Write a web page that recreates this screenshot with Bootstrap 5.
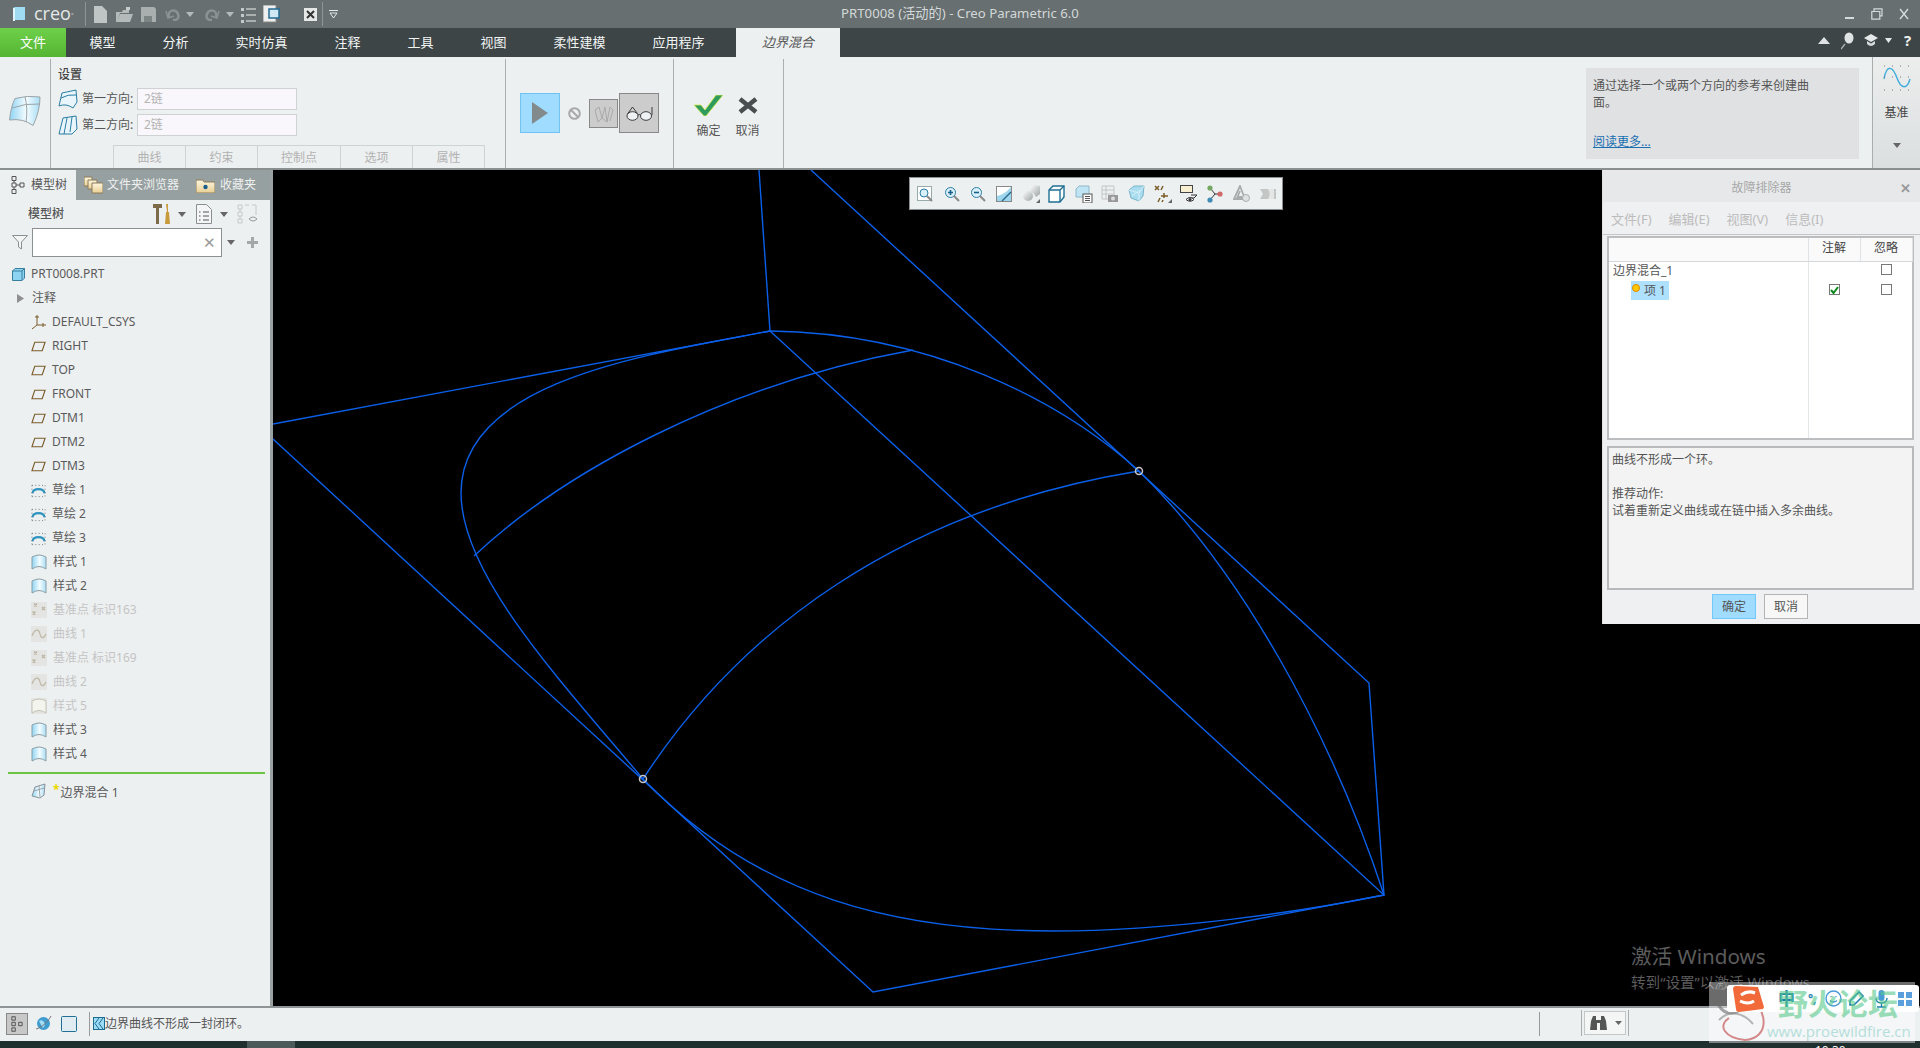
<!DOCTYPE html>
<html lang="zh">
<head>
<meta charset="UTF-8">
<title>PRT0008 (活动的) - Creo Parametric 6.0</title>
<link href="https://cdn.jsdelivr.net/npm/bootstrap@5.3.0/dist/css/bootstrap.min.css" rel="stylesheet">
<style>
html, body { height: 1048px; }
body { width: 1920px; background: #000; font-family: "Noto Sans", "Noto Sans CJK SC", sans-serif; font-size: 12px; color: #555; overflow: hidden; position: relative; }
.defs-holder { width: 0; height: 0; flex: none; }
svg { display: block; flex: none; }
.ml-2px { margin-left: 2px; } .ml-5px { margin-left: 5px; } .ml-6px { margin-left: 6px; } .ml-7px { margin-left: 7px; }
.ml-8px { margin-left: 8px; } .ml-9px { margin-left: 9px; } .ml-10px { margin-left: 10px; } .ml-12px { margin-left: 12px; } .ml-13px { margin-left: 13px; }
.mr-7px { margin-right: 7px; } .mr-10px { margin-right: 10px; } .mr-11px { margin-right: 11px; } .mr-12px { margin-right: 12px; }

.title-bar { height: 28px; flex: none; background: #676f70; position: relative; padding-left: 13px; }
.creo-word { font-family: "Open Sans", sans-serif; font-size: 18px; color: #e4e8e8; width: 60px; padding-left: 9px; line-height: 1; margin-top: -3px; }
.creo-word sup { font-size: 6px; }
.q-sep { width: 1px; height: 24px; background: #8d9595; margin-right: 2px; flex: none; }
.q-sep-end { margin: 0 6px 0 5px; }
.q-slot { width: 24px; display: flex; justify-content: center; }
.q-caret { width: 12px; display: flex; justify-content: center; }
.q-gap { width: 20px; }
.app-title { position: absolute; left: 0; right: 0; top: 3px; text-align: center; font-size: 13.2px; line-height: 20px; color: #d3d8d8; }
.win-btns { position: absolute; right: 11px; top: 8px; gap: 16px; }

.ribbon-tabs { height: 29px; flex: none; background: #3d4547; position: relative; flex-wrap: nowrap; }
.rtab { font-size: 13px; line-height: 29px; color: #f2f4f4; padding: 0 23.5px; }
.rtab-file { width: 66px; padding: 0; text-align: center; background: linear-gradient(#6ed04a, #55b532); color: #fff; }
.rtab-active { width: 104px; margin-left: 8px; padding: 0; text-align: center; background: #edf0f1; color: #555; font-style: italic; }
.help-icons { position: absolute; right: 7px; top: 4px; height: 17px; }
.help-mark { color: #eef0f0; font-size: 15px; font-weight: 700; line-height: 1; width: 9px; }

.ribbon { height: 113px; flex: none; background: #edf0f1; border-bottom: 2px solid #8a8f90; position: relative; }
.rb-group { height: 109px; margin-top: 2px; border-right: 1px solid #aab0b1; flex: none; }
.rb-first { width: 51px; padding: 37px 0 0 9px; }
.rb-settings { width: 455px; padding-left: 7px; position: relative; }
.rb-heading { font-size: 12px; line-height: 16px; margin-top: 8px; margin-bottom: 3px; color: #444; font-weight: 500; }
.dir-row { height: 26px; gap: 4px; }
.dir-label { width: 51px; white-space: nowrap; color: #555; font-size: 12px; }
.dir-input { width: 160px; height: 22px; border: 1px solid #cfd2d3; background: #f9f7fb; color: #b4b4b4; padding-left: 6px; line-height: 20px; }
.rb-tabs { position: absolute; left: 62px; bottom: 0; height: 23px; }
.rb-tab { border: 1px solid #d0d3d4; border-bottom: 0; margin-right: -1px; height: 23px; line-height: 23px; text-align: center; color: #b2b2b2; width: 73px; }
.rb-tab-wide { width: 84px; }
.rb-run { width: 168px; padding: 34px 0 0 14px; }
.play-box { width: 40px; height: 40px; background: #a0dcff; border: 1px solid #70c4f4; }
.no-sign { width: 29px; margin-top: 14px; }
.geo-box { width: 29px; height: 29px; background: #cccccc; border: 1px solid #888; margin-top: 6px; }
.glass-box { width: 40px; height: 40px; background: #cccccc; border: 1px solid #888; margin-left: 1px; }
.rb-ok { width: 110px; padding: 36px 0 0 15px; }
.ok-btn { width: 39px; }
.ok-icon { height: 21px; }
.ok-label { margin-top: 7px; line-height: 16px; color: #555; }
.help-box { position: absolute; left: 1586px; top: 11px; width: 273px; height: 91px; background: #e0e1e3; padding: 9px 7px; line-height: 17px; color: #555; }
.help-box p { margin: 0 0 22px; width: 225px; }
.help-box a { color: #1a6fb0; }
.datum-col { position: absolute; left: 1872px; top: 0; width: 48px; height: 111px; background: linear-gradient(#eceeee, #dcdfdf); border-left: 1px solid #a8adad; padding-top: 8px; color: #444; }
.datum-col span { margin-top: 14px; line-height: 16px; }
.datum-caret { margin-top: 22px; }

.work-area { height: 836px; flex: none; }
.left-pane { width: 273px; flex: none; background: #edf0f1; border-right: 3px solid #9aa1a2; }
.pane-tabs { height: 30px; background: #97a0a1; color: #eef0f0; font-size: 12px; }
.pane-tab { height: 30px; gap: 6px; }
.pane-tab-on { width: 76px; background: #edf0f1; color: #555; padding-left: 11px; }
.pane-tab-2 { padding-left: 8px; width: 112px; gap: 4px; }
.pane-tab-3 { padding-left: 8px; gap: 5px; }
.tree-tools { height: 28px; padding-left: 28px; }
.tree-title { width: 125px; font-weight: 500; color: #555; font-size: 12px; }
.filter-row { height: 31px; margin-top: -1px; padding-left: 12px; }
.filter-input { width: 190px; height: 29px; margin-left: 4px; background: #fff; border: 1px solid #8b9091; padding-right: 5px; color: #999; font-size: 15px; }
.tree-list { margin: 4px 0 0; padding: 0; list-style: none; }
.tree-row { height: 24px; gap: 6px; padding-left: 31px; color: #5a5a5a; font-size: 12px; white-space: nowrap; }
.tree-root { padding-left: 12px; }
.tree-note { padding-left: 17px; gap: 8px; }
.tree-off { color: #c4c4c4; }
.tree-rule { height: 2px; width: 257px; margin: 6px 0 5px 8px; background: #6cc644; }
.new-star { color: #e8d800; font-size: 12px; vertical-align: 3px; font-weight: 700; margin-right: 1px; }

.canvas-pane { flex-grow: 1; background: #000; position: relative; }
.curve-view { position: absolute; left: 0; top: 0; }
.view-bar { position: absolute; left: 636px; top: 7px; width: 374px; height: 33px; background: #edf0f1; border: 1px solid #8a9091; padding-left: 2px; }
.view-slot { width: 26.4px; display: flex; justify-content: center; flex: none; }
.activate-note { position: absolute; left: 1358px; top: 776px; color: #5c5c5c; line-height: 1; white-space: nowrap; }
.activate-note b { display: block; font-weight: 400; font-size: 20.6px; margin-bottom: 8px; }
.activate-note span { font-size: 14.6px; }

.fix-dialog { position: absolute; left: 1329px; top: 0; width: 318px; height: 454px; background: #eff0f2; border-left: 1px solid #dfe1e2; }
.fix-head { height: 32px; background: #e6e8ea; color: #a8a8a8; text-align: center; line-height: 32px; padding-top: 2px; position: relative; }
.fix-close { position: absolute; right: 9px; top: 2px; font-weight: 700; font-size: 13px; color: #999; }
.fix-menu { height: 33px; padding: 3px 0 0 8px; gap: 17px; color: #bcbcbc; font-size: 13px; border-bottom: 1px solid #c4c6c7; }
.fix-tree { margin: 1px 0 0 4px; width: 307px; height: 204px; border: 2px solid #bcbdbe; background: #fff; }
.fix-table { width: 303px; height: 200px; table-layout: fixed; border-collapse: collapse; }
.col-name { width: 199px; } .col-flag { width: 52px; }
.fix-table th { height: 23px; background: #fafafa; font-weight: 400; text-align: center; border-right: 1px solid #dfe3e6; border-bottom: 1px solid #d5d8da; color: #444; padding: 0 0 2px; }
.fix-table td { height: 20px; padding: 0 0 0 4px; white-space: nowrap; color: #555; }
.fix-table td:first-child { border-right: 1px solid #e3e7ea; }
.fix-table td.cell-mid { padding: 0; }
.fix-table .filler td { height: auto; }
.fix-box { width: 11px; height: 11px; border: 1px solid #777; background: #fff; margin: 0 auto; display: flex; align-items: center; justify-content: center; }
.fix-box-up { margin-top: -3px; }
.item-pick { display: inline-flex; align-items: center; margin: -2px 0 0 18px; height: 19px; width: 38px; background: #aee0ff; gap: 4px; padding-left: 1px; vertical-align: middle; }
.item-dot { margin-top: -5px; }
.fix-msg { margin: 6px 0 0 4px; width: 307px; height: 144px; background: #f3f3f3; border: 2px solid #b8b9ba; padding: 3px 3px; line-height: 17px; color: #555; }
.fix-msg p { margin: 0; }
.fix-btns { margin-top: 4px; padding-left: 109px; gap: 8px; }
.fix-btn { width: 44px; height: 25px; line-height: 23px; text-align: center; border: 1px solid #b4b4b4; background: #f7f7f7; color: #555; }
.fix-btn-on { background: #a0dcff; border-color: #70c8ff; }

.status-bar { height: 35px; flex: none; background: #edf0f1; border-top: 2px solid #8f9596; padding: 0 0 2px 6px; position: relative; color: #555; }
.stat-on { width: 22px; height: 22px; background: #c8c8c8; border: 1px solid #888; }
.stat-sep { width: 1px; height: 24px; background: #999; margin: 0 3px 0 12px; }
.stat-sep-far { position: absolute; left: 1539px; top: 4px; margin: 0; }
.find-box { position: absolute; left: 1581px; top: 2px; height: 26px; border-left: 1px solid #a8adad; border-right: 1px solid #a8adad; padding: 1px 2px; }
.find-inner { width: 42px; height: 24px; border: 1px solid #c4c7c8; background: #f4f5f5; }
.task-bar { height: 8px; flex: none; background: #20302f; position: relative; overflow: hidden; color: #fff; }
.task-on { position: absolute; left: 247px; top: 0; width: 48px; height: 8px; background: #4c5a5a; }
.task-clock { position: absolute; left: 1815px; top: 3px; line-height: 14px; font-size: 12px; }

.site-mark { position: absolute; left: 1709px; top: 982px; width: 206px; height: 61px; background: rgba(255,255,255,.42); }
.ime-bar { position: absolute; left: 18px; top: 3px; width: 192px; height: 27px; border-radius: 3px; background: #fff; padding-left: 51px; color: #1f7fae; font-size: 17px; font-weight: 700; }
.ime-punct { font-size: 12px; }
.ime-s { position: absolute; left: 24px; top: 3px; }
.site-name { position: absolute; left: 69px; top: 2px; font-size: 30px; line-height: 40px; color: #58c98c; opacity: .6; white-space: nowrap; font-weight: 700; }
.site-url { position: absolute; left: 58px; top: 37px; font-family: "Open Sans", sans-serif; font-size: 15px; line-height: 24px; color: #b4dedb; white-space: nowrap; }
.site-logo { position: absolute; left: 0; top: 0; }
</style>
</head>
<body class="d-flex flex-column">

<svg class="defs-holder" width="0" height="0">
  <defs>
    <linearGradient id="gradBlue" x1="0" y1="0" x2="1" y2="0"><stop offset="0" stop-color="#8fd4f4"/><stop offset=".55" stop-color="#f4fcff"/><stop offset="1" stop-color="#a8def6"/></linearGradient>
    <linearGradient id="gradGrey" x1="0" y1="0" x2="1" y2="1"><stop offset="0" stop-color="#fff"/><stop offset="1" stop-color="#9ba1a2"/></linearGradient>
    <linearGradient id="gradFolder" x1="0" y1="0" x2="0" y2="1"><stop offset="0" stop-color="#fdf6df"/><stop offset="1" stop-color="#e9cf94"/></linearGradient>
    <symbol id="icoPlane" viewBox="0 0 16 16"><path d="M4 3.5h11l-3 9H1z" fill="none" stroke="#7a5c2a" stroke-width="1.2"/></symbol>
    <symbol id="icoSketch" viewBox="0 0 16 16"><path d="M1.5 11C2.500 5 13.500 5 14.500 11" fill="none" stroke="#2f93c0" stroke-width="2.200"/><path d="M1 2.500h14M1 14.500h14M1 2.500v12M15 2.500v12" fill="none" stroke="#666" stroke-width=".9" stroke-dasharray="1 2.600"/></symbol>
    <symbol id="icoStyle" viewBox="0 0 16 16"><path d="M1 3Q8 -1 15 3V15Q8 10 1 15z" fill="url(#gradBlue)" stroke="#8c9ea6"/></symbol>
    <symbol id="icoStyleOff" viewBox="0 0 16 16"><rect width="16" height="16" fill="#e4e4e2"/><path d="M1 3Q8 -1 15 3V15Q8 10 1 15z" fill="#f4f4ee" stroke="#c2c2b4"/></symbol>
    <symbol id="icoPoint" viewBox="0 0 16 16"><rect width="16" height="16" fill="#e4e4e2"/><path d="M3 1.500l3 3m0-3l-3 3M11 5l3 3m0-3l-3 3M1.500 9.500l3 3m0-3l-3 3" stroke="#bdb7a6" stroke-width="1.600" fill="none"/></symbol>
    <symbol id="icoCurve" viewBox="0 0 16 16"><rect width="16" height="16" fill="#e4e4e2"/><path d="M1 10C4 2 8 3 9 8s4 5 6 0" fill="none" stroke="#bdb7a6" stroke-width="1.200"/></symbol>
    <symbol id="icoBlend" viewBox="0 0 16 16"><path d="M1 13L4 4 14 1 13 12 9 15z" fill="url(#gradBlue)" stroke="#8a9298"/><path d="M3 8l10-3M8 3l1 11" stroke="#8a9298" fill="none" stroke-width=".8"/></symbol>
    <symbol id="icoCaret" viewBox="0 0 8 5"><path d="M0 0h8L4 5z" fill="#666"/></symbol>
    <symbol id="icoCaretLight" viewBox="0 0 8 5"><path d="M0 0h8L4 5z" fill="#b4baba"/></symbol>
    <symbol id="icoCorner" viewBox="0 0 4 4"><path d="M4 0v4H0z" fill="#666"/></symbol>
  </defs>
</svg>

<!-- title bar -->
<div class="title-bar d-flex align-items-center">
  <svg width="12" height="14" viewBox="0 0 12 14"><path d="M2 0h10v13H0V1z" fill="#9fdcf2"/><path d="M0 1h2v13H0z" fill="#dff4fb"/></svg>
  <div class="creo-word">creo<sup>°</sup></div>
  <div class="q-sep"></div>
  <div class="q-slot"><svg width="13" height="17" viewBox="0 0 13 17"><path d="M0 0h8l5 5v12H0z" fill="#bfc5c5"/></svg></div>
  <div class="q-slot"><svg width="17" height="15" viewBox="0 0 17 15"><path d="M0 5h6l1-2h6v3H4L1 15H0zM4 7h13l-3 8H1z" fill="#b4baba"/><path d="M10 0h4v3h-4z" fill="#c6cbcb"/></svg></div>
  <div class="q-slot"><svg width="15" height="15" viewBox="0 0 15 15"><path d="M0 0h13l2 2v13H0z" fill="#a9afaf"/><path d="M3 9h8v6H3z" fill="#7c8484"/></svg></div>
  <div class="q-slot"><svg width="15" height="13" viewBox="0 0 15 13" fill="none" stroke="#8a9292" stroke-width="2.500"><path d="M4 9C2 2 11 0 13 6s-3 6-5 6"/><path d="M1 3l2 7 6-2" stroke-width="1.500"/></svg></div>
  <div class="q-caret"><svg width="8" height="5"><use href="#icoCaretLight"/></svg></div>
  <div class="q-slot ms-1"><svg width="15" height="13" viewBox="0 0 15 13" fill="none" stroke="#8a9292" stroke-width="2.500"><path d="M11 9C13 2 4 0 2 6s3 6 5 6"/><path d="M14 3l-2 7-6-2" stroke-width="1.500"/></svg></div>
  <div class="q-caret"><svg width="8" height="5"><use href="#icoCaretLight"/></svg></div>
  <div class="q-slot"><svg width="15" height="17" viewBox="0 0 15 17"><path d="M0 2h3v3H0zM0 8h3v3H0zM0 14h3v3H0z" fill="#c4c9c9"/><path d="M5 3h10M5 9h10M5 15h10" stroke="#aab0b0" stroke-width="2"/></svg></div>
  <div class="q-slot"><svg width="18" height="18" viewBox="0 0 18 18"><rect x="0" y="0" width="13" height="17" fill="#eef0f0" stroke="#888"/><rect x="6" y="4" width="10" height="9" fill="#cfe8f4" stroke="#246a92" stroke-width="1.500"/></svg></div>
  <div class="q-gap"></div>
  <svg width="13" height="13" viewBox="0 0 13 13"><rect width="13" height="13" fill="#e6e8e8"/><path d="M3 3l7 7m0-7l-7 7" stroke="#333" stroke-width="2"/></svg>
  <div class="q-sep q-sep-end"></div>
  <svg width="9" height="8" viewBox="0 0 9 8"><path d="M0 .5h9M1 3l3.500 5L8 3z" fill="none" stroke="#e4e8e8"/></svg>
  <div class="app-title">PRT0008 (活动的) - Creo Parametric 6.0</div>
  <div class="win-btns d-flex align-items-center">
    <svg width="10" height="12" viewBox="0 0 10 12"><path d="M0 9h9v2H0z" fill="#d5dada"/></svg>
    <svg width="12" height="12" viewBox="0 0 12 12" fill="none" stroke="#d5dada" stroke-width="1.200"><path d="M3 3V.8h8v7H9"/><path d="M.8 3.500h8v7.700h-8z"/></svg>
    <svg width="10" height="12" viewBox="0 0 10 12"><path d="M1 1l8 10m0-10L1 11" stroke="#d5dada" stroke-width="1.400"/></svg>
  </div>
</div>

<!-- ribbon tabs -->
<div class="nav ribbon-tabs">
  <span class="rtab rtab-file">文件</span>
  <span class="rtab">模型</span>
  <span class="rtab">分析</span>
  <span class="rtab">实时仿真</span>
  <span class="rtab">注释</span>
  <span class="rtab">工具</span>
  <span class="rtab">视图</span>
  <span class="rtab">柔性建模</span>
  <span class="rtab">应用程序</span>
  <span class="rtab rtab-active">边界混合</span>
  <div class="help-icons d-flex align-items-center">
    <svg class="mr-11px" width="12" height="7" viewBox="0 0 12 7"><path d="M0 7L6 0l6 7z" fill="#dfe3e3"/></svg>
    <svg class="mr-10px" width="13" height="18" viewBox="0 0 13 18"><ellipse cx="8" cy="6" rx="4.500" ry="5.500" fill="#dfe3e3"/><path d="M4 12L0 17" stroke="#aeb4b4" stroke-width="1.300"/></svg>
    <svg class="mr-7px" width="14" height="13" viewBox="0 0 14 13"><path d="M7 0l7 4-7 4-7-4z" fill="#e6e9e9"/><path d="M3 7v3q4 4 8 0V7L7 9.500z" fill="#d4d9d9"/></svg>
    <svg class="mr-12px" width="7" height="5"><path d="M0 0h7L3.500 5z" fill="#e6e9e9"/></svg>
    <span class="help-mark">?</span>
  </div>
</div>

<!-- ribbon -->
<div class="ribbon d-flex">
  <div class="rb-group rb-first">
    <svg width="32" height="30" viewBox="0 0 32 30"><path d="M.5 24Q2 10 6 2.500Q18 -1 31 1Q31 15 24 29.500Q14 22 .5 24z" fill="url(#gradBlue)" stroke="#9aa2a6"/><path d="M3 12Q16 7 31 8M16 1Q19 12 17 26" stroke="#9aa2a6" fill="none"/></svg>
  </div>
  <div class="rb-group rb-settings">
    <div class="rb-heading">设置</div>
    <div class="dir-row d-flex align-items-center">
      <svg width="20" height="20" viewBox="0 0 20 20"><path d="M1 17L4 4 18 1 19 13 15 19Q8 14 1 17z" fill="#e8f6fc" stroke="#2a7ca4"/><path d="M3 9Q10 5 18 6" stroke="#2a7ca4" fill="none"/></svg>
      <span class="dir-label">第一方向:</span>
      <div class="dir-input">2链</div>
    </div>
    <div class="dir-row d-flex align-items-center">
      <svg width="20" height="20" viewBox="0 0 20 20"><path d="M1 19L5 3 18 1 19 14 14 19z" fill="#e8f6fc" stroke="#2a7ca4"/><path d="M9 3L6 19M14 2l-2 15" stroke="#2a7ca4" fill="none"/></svg>
      <span class="dir-label">第二方向:</span>
      <div class="dir-input">2链</div>
    </div>
    <div class="rb-tabs d-flex">
      <div class="rb-tab">曲线</div>
      <div class="rb-tab">约束</div>
      <div class="rb-tab rb-tab-wide">控制点</div>
      <div class="rb-tab">选项</div>
      <div class="rb-tab">属性</div>
    </div>
  </div>
  <div class="rb-group rb-run d-flex align-items-start">
    <div class="play-box d-flex align-items-center justify-content-center">
      <svg width="16" height="22" viewBox="0 0 16 22"><path d="M0 0l16 11L0 22z" fill="#838a8c"/></svg>
    </div>
    <div class="no-sign d-flex justify-content-center">
      <svg width="13" height="13" viewBox="0 0 13 13" fill="none" stroke="#a8a8a8" stroke-width="2"><circle cx="6.500" cy="6.500" r="5.300"/><path d="M3 3l7 7"/></svg>
    </div>
    <div class="geo-box d-flex align-items-center justify-content-center">
      <svg width="20" height="18" viewBox="0 0 20 18" fill="none" stroke="#a9a9a9"><path d="M1 5l4-3 3 11-4 4zM8 13l3-11 2 15zM13 17l3-15 3 3-3 11"/></svg>
    </div>
    <div class="glass-box d-flex align-items-center justify-content-center">
      <svg width="27" height="15" viewBox="0 0 27 15" fill="none" stroke="#3c3c3c"><ellipse cx="6.500" cy="10" rx="5.500" ry="4.300" fill="#eef2f4"/><ellipse cx="20" cy="10" rx="5.500" ry="4.300" fill="#eef2f4"/><path d="M12 9q1.200-1 2.500 0M1.500 8l5-7 5 6.500M26 9V1"/></svg>
    </div>
  </div>
  <div class="rb-group rb-ok d-flex align-items-start">
    <div class="ok-btn d-flex flex-column align-items-center">
      <svg class="ok-icon" width="29" height="21" viewBox="0 0 29 21"><path d="M0 10h7l4 5L22 0h7L12 21h-2z" fill="#2f9b5c" stroke="#d7e84c" stroke-width=".8"/></svg>
      <span class="ok-label">确定</span>
    </div>
    <div class="ok-btn d-flex flex-column align-items-center">
      <svg class="ok-icon" width="20" height="21" viewBox="0 0 20 21"><path d="M2 4l16 13m0-13L2 17" stroke="#4a4e50" stroke-width="4.500"/></svg>
      <span class="ok-label">取消</span>
    </div>
  </div>
  <div class="help-box">
    <p>通过选择一个或两个方向的参考来创建曲面。</p>
    <a href="#">阅读更多...</a>
  </div>
  <div class="datum-col d-flex flex-column align-items-center">
    <svg width="28" height="26" viewBox="0 0 28 26"><path d="M1 14C4 -2 10 2 14 13s10 12 13 1" fill="none" stroke="#45aedc" stroke-width="1.500"/><path d="M1 1h26M1 12h26M1 25h26" stroke="#777" stroke-dasharray="1 7" fill="none"/></svg>
    <span>基准</span>
    <svg class="datum-caret" width="8" height="5"><use href="#icoCaret"/></svg>
  </div>
</div>

<!-- main area -->
<div class="work-area d-flex">
  <aside class="left-pane">
    <div class="pane-tabs d-flex">
      <div class="pane-tab pane-tab-on d-flex align-items-center">
        <svg width="14" height="18" viewBox="0 0 14 18" fill="none" stroke="#555"><path d="M1 .5h4v4H1zM1 7h4v4H1zM1 13.500h4v4H1zM9 7h4v4H9zM3 4.500V7M3 11v2.500M5 9h4"/></svg>
        <span>模型树</span>
      </div>
      <div class="pane-tab pane-tab-2 d-flex align-items-center">
        <svg width="19" height="18" viewBox="0 0 19 18" stroke="#8a7a58"><path d="M0 1h8v9H0z" fill="url(#gradFolder)"/><path d="M4 4h9v9H4z" fill="url(#gradFolder)"/><path d="M8 7h11v10H8z" fill="url(#gradFolder)"/></svg>
        <span>文件夹浏览器</span>
      </div>
      <div class="pane-tab pane-tab-3 d-flex align-items-center">
        <svg width="19" height="15" viewBox="0 0 19 15"><path d="M0 2h7l1 2h11v11H0z" fill="url(#gradFolder)" stroke="#8a7a58"/><circle cx="9.500" cy="9" r="2.200" fill="#1a5f8c"/></svg>
        <span>收藏夹</span>
      </div>
    </div>
    <div class="tree-tools d-flex align-items-center">
      <span class="tree-title">模型树</span>
      <svg width="17" height="20" viewBox="0 0 17 20"><path d="M0 0h9v4H6v16H3V4H0z" fill="#7c6a48"/><path d="M13 0h2v8h1l1 12h-5l1-12h1z" fill="#c99a3c"/></svg>
      <svg class="ml-8px" width="8" height="5"><use href="#icoCaret"/></svg>
      <svg class="ml-10px" width="16" height="20" viewBox="0 0 16 20"><path d="M.5.500h10l5 5v14H.5z" fill="#f4f5f6" stroke="#8a9092"/><path d="M3 8h1.500M3 12h1.500M3 16h1.500M7 8h6M7 12h6M7 16h6" stroke="#555"/></svg>
      <svg class="ml-8px" width="8" height="5"><use href="#icoCaret"/></svg>
      <svg class="ml-9px" width="21" height="20" viewBox="0 0 21 20" fill="none" stroke="#c6c8c8"><path d="M1 1h4v4H1zM1 8h4v4H1zM1 15h4v4H1zM8 1h4M15 1h4v10M3 5v3M3 12v3"/><path d="M12 15q4-4 8 0q-4 4-8 0z" stroke="#999"/></svg>
    </div>
    <div class="filter-row d-flex align-items-center">
      <svg width="16" height="15" viewBox="0 0 16 15"><path d="M.5.500h15L9.500 7v7l-3-2V7z" fill="#f3f4f4" stroke="#8a8f90"/></svg>
      <div class="filter-input d-flex align-items-center justify-content-end">&#10005;</div>
      <svg class="ml-5px" width="8" height="5"><use href="#icoCaret"/></svg>
      <svg class="ml-12px" width="11" height="11" viewBox="0 0 11 11"><path d="M4 0h3v4h4v3H7v4H4V7H0V4h4z" fill="#a4a8a8"/></svg>
    </div>
    <ul class="tree-list">
      <li class="tree-row tree-root d-flex align-items-center">
        <svg width="13" height="13" viewBox="0 0 13 13"><path d="M3 .5h9.500V10L10 12.500H.5V3z" fill="#8dd4f2" stroke="#3a7e9e"/><path d="M.5 3H10v9.500M10 3l2.500-2.500" fill="none" stroke="#3a7e9e"/></svg>
        <span>PRT0008.PRT</span>
      </li>
      <li class="tree-row tree-note d-flex align-items-center">
        <svg width="7" height="9" viewBox="0 0 7 9"><path d="M0 0l7 4.500L0 9z" fill="#8f8f8f"/></svg>
        <span>注释</span>
      </li>
      <li class="tree-row d-flex align-items-center">
        <svg width="15" height="15" viewBox="0 0 15 15" fill="none" stroke="#7a5c2a"><path d="M6 0v10H15M6 10L1 14M4 2h4M12 8v4"/></svg>
        <span>DEFAULT_CSYS</span>
      </li>
      <li class="tree-row d-flex align-items-center"><svg width="15" height="15"><use href="#icoPlane"/></svg><span>RIGHT</span></li>
      <li class="tree-row d-flex align-items-center"><svg width="15" height="15"><use href="#icoPlane"/></svg><span>TOP</span></li>
      <li class="tree-row d-flex align-items-center"><svg width="15" height="15"><use href="#icoPlane"/></svg><span>FRONT</span></li>
      <li class="tree-row d-flex align-items-center"><svg width="15" height="15"><use href="#icoPlane"/></svg><span>DTM1</span></li>
      <li class="tree-row d-flex align-items-center"><svg width="15" height="15"><use href="#icoPlane"/></svg><span>DTM2</span></li>
      <li class="tree-row d-flex align-items-center"><svg width="15" height="15"><use href="#icoPlane"/></svg><span>DTM3</span></li>
      <li class="tree-row d-flex align-items-center"><svg width="15" height="15"><use href="#icoSketch"/></svg><span>草绘 1</span></li>
      <li class="tree-row d-flex align-items-center"><svg width="15" height="15"><use href="#icoSketch"/></svg><span>草绘 2</span></li>
      <li class="tree-row d-flex align-items-center"><svg width="15" height="15"><use href="#icoSketch"/></svg><span>草绘 3</span></li>
      <li class="tree-row d-flex align-items-center"><svg width="16" height="16"><use href="#icoStyle"/></svg><span>样式 1</span></li>
      <li class="tree-row d-flex align-items-center"><svg width="16" height="16"><use href="#icoStyle"/></svg><span>样式 2</span></li>
      <li class="tree-row tree-off d-flex align-items-center"><svg width="16" height="16"><use href="#icoPoint"/></svg><span>基准点 标识163</span></li>
      <li class="tree-row tree-off d-flex align-items-center"><svg width="16" height="16"><use href="#icoCurve"/></svg><span>曲线 1</span></li>
      <li class="tree-row tree-off d-flex align-items-center"><svg width="16" height="16"><use href="#icoPoint"/></svg><span>基准点 标识169</span></li>
      <li class="tree-row tree-off d-flex align-items-center"><svg width="16" height="16"><use href="#icoCurve"/></svg><span>曲线 2</span></li>
      <li class="tree-row tree-off d-flex align-items-center"><svg width="16" height="16"><use href="#icoStyleOff"/></svg><span>样式 5</span></li>
      <li class="tree-row d-flex align-items-center"><svg width="16" height="16"><use href="#icoStyle"/></svg><span>样式 3</span></li>
      <li class="tree-row d-flex align-items-center"><svg width="16" height="16"><use href="#icoStyle"/></svg><span>样式 4</span></li>
    </ul>
    <div class="tree-rule"></div>
    <div class="tree-row d-flex align-items-center">
      <svg width="16" height="16"><use href="#icoBlend"/></svg>
      <span><span class="new-star">*</span>边界混合 1</span>
    </div>
  </aside>

  <main class="canvas-pane">
    <svg class="curve-view" width="1647" height="836" viewBox="273 170 1647 836" fill="none" stroke="#0a60ea" stroke-width="1.400">
      <path d="M759 170L770 331"/>
      <path d="M811 170L1369 683L1384 895"/>
      <path d="M273 424L770 331L1384 895L873 992L273 439"/>
      <path d="M770 331C930 333 1060 400 1139 471C1240 570 1330 730 1384 895"/>
      <path d="M770 331C650 354 461 380 461 493C461 575 560 680 643 779C760 900 900 931 1053 931C1170 931 1300 912 1384 895"/>
      <path d="M474 556C560 475 720 385 913 350"/>
      <path d="M643 779C740 630 900 510 1139 471"/>
      <circle cx="643" cy="779" r="3.500" stroke="#c8c8c8" stroke-width="1.500"/>
      <circle cx="1139" cy="471" r="3.500" stroke="#c8c8c8" stroke-width="1.500"/>
    </svg>

    <div class="view-bar d-flex align-items-center">
      <div class="view-slot"><svg width="16" height="16" viewBox="0 0 16 16"><rect x=".5" y=".5" width="14" height="14" fill="#fff" stroke="#9aa"/><circle cx="7" cy="7" r="4" fill="#d8f0fb" stroke="#2a7ca4"/><path d="M10 10l5 5" stroke="#888" stroke-width="2"/></svg></div>
      <div class="view-slot"><svg width="16" height="16" viewBox="0 0 16 16"><circle cx="6.500" cy="6.500" r="5" fill="#d8f0fb" stroke="#2a7ca4"/><path d="M4 6.500h5M6.500 4v5" stroke="#1a5f8c" stroke-width="1.600"/><path d="M10 10l5 5" stroke="#888" stroke-width="2"/></svg></div>
      <div class="view-slot"><svg width="16" height="16" viewBox="0 0 16 16"><circle cx="6.500" cy="6.500" r="5" fill="#d8f0fb" stroke="#2a7ca4"/><path d="M4 6.500h5" stroke="#1a5f8c" stroke-width="1.600"/><path d="M10 10l5 5" stroke="#888" stroke-width="2"/></svg></div>
      <div class="view-slot"><svg width="16" height="16" viewBox="0 0 16 16"><rect x=".5" y=".5" width="15" height="15" fill="#fff" stroke="#888"/><path d="M1 15L1 10Q8 9 15 1V15z" fill="#9ed6ee"/><path d="M6 15l9-9" stroke="#2a6c8e" stroke-width="1.500"/></svg></div>
      <div class="view-slot"><svg width="18" height="18" viewBox="0 0 18 18"><circle cx="6" cy="11" r="5" fill="url(#gradGrey)"/><path d="M8 2l4-2 6 1v8l-4 3-2-3-4-3z" fill="url(#gradGrey)"/><use href="#icoCorner" x="14" y="14" width="4" height="4"/></svg></div>
      <div class="view-slot"><svg width="18" height="18" viewBox="0 0 18 18" fill="#fff" stroke="#1f6f94" stroke-width="1.400"><path d="M1 5l4-4h11v11l-4 5H1z"/><path d="M1 5h11v12M12 5l4-4" fill="none"/></svg></div>
      <div class="view-slot"><svg width="18" height="18" viewBox="0 0 18 18"><path d="M1 4l3-3h10v11H1z" fill="#bfe5f5" stroke="#8fb8ca"/><rect x="8" y="9" width="9" height="9" fill="#fff" stroke="#555"/><path d="M10 11.500h5M10 13.500h5M10 15.500h5" stroke="#555"/></svg></div>
      <div class="view-slot"><svg width="17" height="17" viewBox="0 0 17 17" fill="none" stroke="#c2c4c4"><path d="M1 1h12v13H1zM1 5h12M1 9h12M5 1v13"/><rect x="7" y="10" width="10" height="7" fill="#999" stroke="none"/><circle cx="12" cy="13.500" r="2" fill="#ddd" stroke="none"/></svg></div>
      <div class="view-slot"><svg width="17" height="17" viewBox="0 0 17 17"><path d="M1 5l5-4h10l-1 10-4 5-8-3z" fill="#a8dcee" stroke="#7ab4ca"/><path d="M1 5l10 3 5-7M11 8v8M4 11l8-6" stroke="#d6f0f8" fill="none"/></svg></div>
      <div class="view-slot"><svg width="18" height="18" viewBox="0 0 18 18" stroke="#7a5c2a" stroke-width="1.500" fill="none"><path d="M1 1l4 4m0-4L1 5M9 1l-2 4M10 8v5M7 11h7M4 17l2-4M8 17l1-2"/><use href="#icoCorner" x="14" y="14" width="4" height="4" stroke="none"/></svg></div>
      <div class="view-slot"><svg width="18" height="18" viewBox="0 0 18 18"><rect x=".5" y=".5" width="12" height="7" fill="#f8efd0" stroke="#444"/><path d="M11 10h6l-3 3h-3" fill="none" stroke="#333"/><path d="M6 14.500q4-4 8 0q-4 3.500-8 0z" fill="#fff" stroke="#333"/><circle cx="10" cy="14.500" r="1.500" fill="#333"/></svg></div>
      <div class="view-slot"><svg width="16" height="18" viewBox="0 0 16 18" stroke="#333" fill="none"><path d="M3 3l5 6-5 6M8 9h6"/><circle cx="3" cy="3" r="2.600" fill="#74a860" stroke="none"/><circle cx="13" cy="9" r="2.600" fill="#cf6a68" stroke="none"/><circle cx="3" cy="15" r="2.600" fill="#3f8cb4" stroke="none"/></svg></div>
      <div class="view-slot"><svg width="17" height="17" viewBox="0 0 17 17" fill="none" stroke="#a8acac" stroke-width="1.800"><path d="M7 1L1 14h11zM7 6L4.500 12h5"/><circle cx="13" cy="13" r="3.500" fill="#e0e2e2" stroke-width="1"/></svg></div>
      <div class="view-slot"><svg width="16" height="10" viewBox="0 0 16 10"><path d="M0 0h16v10H0l3-5z" fill="#c4c6c6"/><path d="M8 0h6v10H8q3-5 0-10z" fill="#e4e6e6"/></svg></div>
    </div>

    <div class="activate-note">
      <b>激活 Windows</b>
      <span>转到“设置”以激活 Windows。</span>
    </div>

    <div class="fix-dialog">
      <div class="fix-head">故障排除器<span class="fix-close">&#10005;</span></div>
      <div class="fix-menu d-flex align-items-center">
        <span>文件(F)</span><span>编辑(E)</span><span>视图(V)</span><span>信息(I)</span>
      </div>
      <div class="fix-tree">
        <table class="fix-table">
          <colgroup><col class="col-name"><col class="col-flag"><col class="col-flag"></colgroup>
          <thead><tr><th></th><th>注解</th><th>忽略</th></tr></thead>
          <tbody>
            <tr><td>边界混合_1</td><td class="cell-mid"></td><td class="cell-mid"><div class="fix-box fix-box-up"></div></td></tr>
            <tr>
              <td><span class="item-pick"><svg class="item-dot" width="8" height="8" viewBox="0 0 8 8"><circle cx="4" cy="4" r="3.500" fill="#ffc800" stroke="#e08a00"/></svg><span>项 1</span></span></td>
              <td class="cell-mid"><div class="fix-box fix-box-up"><svg width="9" height="8" viewBox="0 0 9 8"><path d="M1 4l2.500 3L8 1" fill="none" stroke="#0a8a1a" stroke-width="2"/></svg></div></td>
              <td class="cell-mid"><div class="fix-box fix-box-up"></div></td>
            </tr>
            <tr class="filler"><td></td><td></td><td></td></tr>
          </tbody>
        </table>
      </div>
      <div class="fix-msg">
        <p>曲线不形成一个环。</p>
        <p>&nbsp;</p>
        <p>推荐动作:</p>
        <p>试着重新定义曲线或在链中插入多余曲线。</p>
      </div>
      <div class="fix-btns d-flex">
        <div class="fix-btn fix-btn-on">确定</div>
        <div class="fix-btn">取消</div>
      </div>
    </div>
  </main>
</div>

<!-- status bar -->
<div class="status-bar d-flex align-items-center">
  <div class="stat-on d-flex align-items-center justify-content-center">
    <svg width="12" height="16" viewBox="0 0 14 18" fill="none" stroke="#444"><path d="M1 .5h4v4H1zM1 7h4v4H1zM1 13.500h4v4H1zM9 7h4v4H9z"/></svg>
  </div>
  <svg class="ml-7px" width="17" height="17" viewBox="0 0 17 17"><circle cx="8.500" cy="8.500" r="6.500" fill="#3f9ccf"/><path d="M4 6q3-2 5 1t-1 6q-2-3-4-7z" fill="#a8dcf2"/><path d="M1 14C6 13 13 7 16 1" stroke="#777" fill="none"/></svg>
  <svg class="ml-9px" width="16" height="16" viewBox="0 0 16 16"><rect x=".5" y=".5" width="15" height="15" rx="1" fill="#e0ecf2" stroke="#1f7094"/></svg>
  <div class="stat-sep"></div>
  <svg width="12" height="13" viewBox="0 0 12 13"><rect x=".5" y=".5" width="11" height="12" fill="#9edcf6" stroke="#1a6c90"/><path d="M6 1L2 6.500 6 12M10 1L6 6.500 10 12" fill="none" stroke="#1a6c90"/></svg>
  <span>边界曲线不形成一封闭环。</span>
  <div class="stat-sep stat-sep-far"></div>
  <div class="find-box d-flex">
    <div class="find-inner d-flex align-items-center">
      <svg class="ml-5px" width="17" height="14" viewBox="0 0 17 14"><path d="M1 5l2-5h3v4h5V0h3l2 5 1 9h-7V7H7v7H0z" fill="#555"/></svg>
      <svg class="ml-8px" width="7" height="4" viewBox="0 0 7 4"><path d="M0 0h7L3.500 4z" fill="#666"/></svg>
    </div>
  </div>
</div>
<div class="task-bar">
  <div class="task-on"></div>
  <div class="task-clock">10:30</div>
</div>

<!-- site watermark and input bar over the corner -->
<div class="site-mark">
  <svg class="site-logo" width="60" height="61" viewBox="0 0 60 61" fill="none">
    <ellipse cx="22" cy="16" rx="14" ry="15" stroke="#6a6a6a" stroke-width="3" opacity=".6"/>
    <path d="M35 8C62 30 60 56 36 58C16 56 8 44 20 36" stroke="#c85a5a" stroke-width="2" opacity=".7"/>
    <path d="M10 38C20 28 34 30 44 42" stroke="#888" stroke-width="2" opacity=".6"/>
  </svg>
  <div class="ime-bar d-flex align-items-center">
    <span>中</span>
    <span class="ime-punct ml-13px">°,</span>
    <svg class="ml-8px" width="17" height="17" viewBox="0 0 17 17" fill="none" stroke="#4a9ad8" stroke-width="1.400"><circle cx="8.500" cy="8.500" r="7.500"/><path d="M5 10.500q3.500 3 7 0M6 6v1M11 6v1"/></svg>
    <svg class="ml-6px" width="17" height="17" viewBox="0 0 17 17" fill="none" stroke="#1f7fae" stroke-width="1.600"><path d="M2 11L11 2l4 4-9 9H2z"/></svg>
    <svg class="ml-10px" width="13" height="18" viewBox="0 0 13 18"><rect x="3.500" y="0" width="6" height="11" rx="3" fill="#4a9ad8"/><path d="M1 8q0 5 5.500 5T12 8M6.500 13v4M2 17h9" fill="none" stroke="#1f7fae" stroke-width="1.400"/></svg>
    <svg class="ml-10px" width="14" height="14" viewBox="0 0 14 14" fill="#5a9edc"><rect width="6" height="6"/><rect x="8" width="6" height="6"/><rect y="8" width="6" height="6"/><rect x="8" y="8" width="6" height="6"/></svg>
  </div>
  <svg class="ime-s" width="32" height="28" viewBox="0 0 32 28"><path d="M0 4q0-3 3-3l22 1 6 20-1 2L6 27q-3 0-3-3z" fill="#f26a3a"/><path d="M8 10q7-5 14-2M7 16q8 4 14 0" stroke="#fff" stroke-width="3" fill="none"/></svg>
  <div class="site-name">野火论坛</div>
  <div class="site-url">www.proewildfire.cn</div>
</div>

<script src="https://cdn.jsdelivr.net/npm/bootstrap@5.3.0/dist/js/bootstrap.bundle.min.js"></script>
</body>
</html>
